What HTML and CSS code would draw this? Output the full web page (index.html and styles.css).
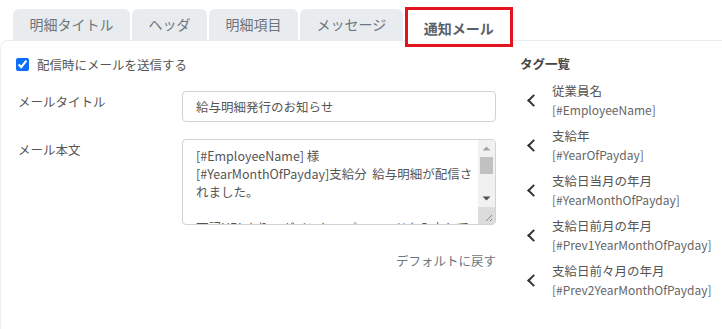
FILE: index.html
```html
<!DOCTYPE html>
<html lang="ja">
<head>
    <meta charset="UTF-8">
    <title>通知メール</title>
<link rel="stylesheet" href="styles.css">
</head>
<body>
    <div class="tabs">
        <div class="tab">明細タイトル</div>
        <div class="tab">ヘッダ</div>
        <div class="tab">明細項目</div>
        <div class="tab">メッセージ</div>
        <div class="tab active">通知メール</div>
    </div>

    <div class="card">
        <div class="form">
            <label class="check_row">
                <input type="checkbox" checked>
                <span>配信時にメールを送信する</span>
            </label>

            <div class="form_row">
                <div class="form_label">メールタイトル</div>
                <input class="text_input" type="text" value="給与明細発行のお知らせ">
            </div>

            <div class="form_row">
                <div class="form_label">メール本文</div>
                <div class="text_area_wrap">
                    <textarea class="text_area">[#EmployeeName] 様
[#YearMonthOfPayday]支給分  給与明細が配信されました。

下記URLよりログインし、パスワードを入力してご確認ください。
[#LoginUrl]</textarea>
                    <!-- textarea scrollbar (headless hides the native one) -->
                    <div class="scrollbar">
                        <svg class="arrow" width="17" height="17" viewBox="0 0 17 17"><path d="M4.5 10.5L8.5 6.5L12.5 10.5Z" fill="#a3a3a3"/></svg>
                        <div class="thumb"></div>
                        <div class="track"></div>
                        <svg class="arrow" width="17" height="17" viewBox="0 0 17 17"><path d="M4.5 6.5L12.5 6.5L8.5 10.5Z" fill="#505050"/></svg>
                        <svg class="grip" width="17" height="17" viewBox="0 0 17 17"><path d="M14 8L8 14M14 12L12 14" stroke="#888" stroke-width="1"/></svg>
                    </div>
                </div>
            </div>

            <div class="reset">デフォルトに戻す</div>
        </div>

        <div class="tag_list">
            <div class="tag_title">タグ一覧</div>

            <div class="tag">
                <span class="chevron"></span>
                <div>
                    <div class="tag_name">従業員名</div>
                    <div class="tag_code">[#EmployeeName]</div>
                </div>
            </div>
            <div class="tag">
                <span class="chevron"></span>
                <div>
                    <div class="tag_name">支給年</div>
                    <div class="tag_code">[#YearOfPayday]</div>
                </div>
            </div>
            <div class="tag">
                <span class="chevron"></span>
                <div>
                    <div class="tag_name">支給日当月の年月</div>
                    <div class="tag_code">[#YearMonthOfPayday]</div>
                </div>
            </div>
            <div class="tag">
                <span class="chevron"></span>
                <div>
                    <div class="tag_name">支給日前月の年月</div>
                    <div class="tag_code">[#Prev1YearMonthOfPayday]</div>
                </div>
            </div>
            <div class="tag">
                <span class="chevron"></span>
                <div>
                    <div class="tag_name">支給日前々月の年月</div>
                    <div class="tag_code">[#Prev2YearMonthOfPayday]</div>
                </div>
            </div>
        </div>
    </div>
</body>
</html>
```

FILE: styles.css
```css
body{
    margin:0;
    font-family: "Noto Sans CJK JP", sans-serif;
    font-size: 12.5px;
    color: #555;
    background-color: white;
    overflow: hidden;
}
.tabs{
    display: flex;
    align-items: flex-start;
    gap: 2px;
    padding: 9px 0 0 13px;
    height: 31px;
}
.tab{
    height: 31px;
    line-height: 31px;
    padding: 0 16.5px;
    font-size: 14px;
    color: #6c757d;
    background-color: #e9ecef;
    border-radius: 6px 6px 0 0;
}
.tab.active{
    position: relative;
    z-index: 1;
    margin-top: -2px;
    height: 34px;
    line-height: 36px;
    padding: 0 16px;
    font-weight: bold;
    color: #5a6068;
    background-color: white;
    border: 3px solid #e3141c;
    border-radius: 0;
}
.card{
    display: flex;
    border-top: 1px solid #e9ecef;
    border-left: 1px solid #eef0f2;
    border-top-left-radius: 8px;
    padding: 0 0 0 15px;
    height: 288px;
}
.form{
    width: 480px;
    display: flex;
    flex-direction: column;
}
.check_row{
    display: flex;
    align-items: center;
    height: 20px;
    margin-top: 13px;
}
.check_row input{
    width: 13px;
    height: 13px;
    margin: 0 8px 0 0;
    accent-color: #0d6efd;
}
.form_row{
    display: flex;
    margin-top: 17px;
}
.form_label{
    width: 166px;
    padding: 1px 0 0 2px;
    box-sizing: border-box;
}
.text_input{
    width: 314px;
    height: 31px;
    box-sizing: border-box;
    border: 1px solid #ced4da;
    border-radius: 4px;
    padding: 0 13px;
    font-family: inherit;
    font-size: 12.5px;
    color: #555;
}
.text_area_wrap{
    position: relative;
    width: 314px;
    height: 86px;
}
.text_area{
    display: block;
    width: 314px;
    height: 86px;
    box-sizing: border-box;
    border: 1px solid #ced4da;
    border-radius: 4px;
    padding: 7px 22px 0 13px;
    font-family: inherit;
    font-size: 12.5px;
    line-height: 18px;
    color: #555;
    resize: none;
    overflow: hidden;
}
.scrollbar{
    position: absolute;
    top: 1px;
    right: 1px;
    bottom: 1px;
    width: 17px;
    display: flex;
    flex-direction: column;
    background-color: #f1f1f1;
    border-radius: 0 3px 3px 0;
    overflow: hidden;
}
.arrow{
    display: block;
    flex: none;
}
.thumb{
    height: 17px;
    margin: 0 2px;
    background-color: #c1c1c1;
}
.track{
    flex: 1;
}
.grip{
    display: block;
    flex: none;
    background-color: #dcdcdc;
}
.reset{
    align-self: flex-end;
    margin-top: 26px;
    color: #6c757d;
}
.tag_list{
    margin-left: 24px;
    display: flex;
    flex-direction: column;
}
.tag_title{
    height: 20px;
    line-height: 20px;
    margin-top: 13px;
    font-weight: bold;
    color: #444;
}
.tag{
    display: flex;
    align-items: center;
    margin-top: 7px;
    line-height: 19px;
}
.chevron{
    width: 7px;
    height: 7px;
    border-left: 2px solid #333;
    border-bottom: 2px solid #333;
    transform: rotate(45deg);
    margin: 0 14px 0 9px;
}
.tag_code{
    font-size: 12px;
    color: #666;
}
```
